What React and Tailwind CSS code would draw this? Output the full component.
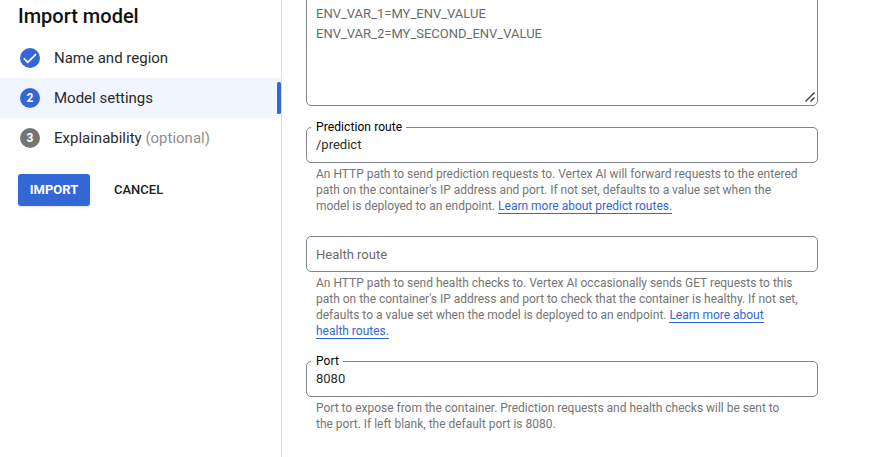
const font = "font-[Roboto,sans-serif]";

function Step({ badge, label, optional, active }) {
  return (
    <div className={`flex h-10 items-center pl-5 ${active ? "bg-[#f0f5ff]" : ""}`}>
      <span className={`flex size-5 items-center justify-center rounded-full text-[12px] font-bold text-white ${optional ? "bg-[#757575]" : "bg-[#3367d6]"}`}>
        {badge}
      </span>
      <span className="ml-3.5 text-[15px] text-[#2b2b2b]">
        {label}
        {optional && <span className="text-[#8f8f8f]"> (optional)</span>}
      </span>
      {active && <span className="ml-auto h-8 w-1 rounded-[1.5px] bg-[#3367d6]" />}
    </div>
  );
}

function Field({ label, value, placeholder, children }) {
  return (
    <div>
      <div className="relative flex h-9 items-center rounded-[5px] border border-[#80868b] px-[9px] text-[13px]">
        {label && (
          <span className="absolute -top-[9px] left-1 bg-white pr-1 pl-[5px] text-[12px] leading-4 tracking-[0.09px] text-black">
            {label}
          </span>
        )}
        <span className={value ? "text-[#2b2b2b]" : "pt-0.5 text-[#6a6a6a]"}>{value || placeholder}</span>
      </div>
      <p className="mt-[3px] pl-2.5 text-[12px] leading-4 tracking-[-0.01px] whitespace-nowrap text-[#757575]">{children}</p>
    </div>
  );
}

function Link({ children }) {
  return <span className="border-b border-[#3367d6] text-[#3367d6]">{children}</span>;
}

export default function App() {
  return (
    <div className={`${font} flex h-[457px] w-[882px] overflow-hidden bg-white`}>
      <aside className="w-[282px] shrink-0 border-r border-[#e0e0e0]">
        <h1 className="flex h-[38px] items-start pt-1 pl-[18px] text-[20px] leading-6 font-medium text-[#111]">Import model</h1>
        <Step
          badge={
            <svg className="size-5" viewBox="0 0 20 20" fill="none" stroke="white" strokeWidth="1.8">
              <path d="M3.8 10.3 7.8 14.3 16 6.1" />
            </svg>
          }
          label="Name and region"
        />
        <Step badge="2" label="Model settings" active />
        <Step badge="3" label="Explainability" optional />
        <div className="mt-4 flex h-8 pl-[18px] text-[13px] font-medium">
          <button className="w-[72px] rounded-[3px] bg-[#3367d6] font-bold text-white shadow">IMPORT</button>
          <button className="ml-6 text-[#212121]">CANCEL</button>
        </div>
      </aside>
      <main className="ml-6 w-[512px]">
        <div className="relative -mt-1 h-[110px] rounded-[5px] border border-[#80868b] px-[9px] pt-[7px] text-[13px] leading-5 text-[#6a6a6a]">
          <div>ENV_VAR_1=MY_ENV_VALUE</div>
          <div>ENV_VAR_2=MY_SECOND_ENV_VALUE</div>
          <svg className="absolute right-0.5 bottom-[3px] size-[10px]" viewBox="0 0 10 10" fill="none" stroke="#3c3c3c" strokeWidth="1.4">
            <path d="M0.5 9.5 9.5 0.5M5.5 9.5 9.5 5.5" />
          </svg>
        </div>
        <div className="mt-[21px]">
          <Field label="Prediction route" value="/predict">
            An HTTP path to send prediction requests to. Vertex AI will forward requests to the entered<br />
            path on the container's IP address and port. If not set, defaults to a value set when the<br />
            model is deployed to an endpoint. <Link>Learn more about predict routes.</Link>
          </Field>
        </div>
        <div className="mt-[22px]">
          <Field placeholder="Health route">
            An HTTP path to send health checks to. Vertex AI occasionally sends GET requests to this<br />
            path on the container's IP address and port to check that the container is healthy. If not set,<br />
            defaults to a value set when the model is deployed to an endpoint. <Link>Learn more about</Link><br />
            <Link>health routes.</Link>
          </Field>
        </div>
        <div className="mt-[22px]">
          <Field label="Port" value="8080">
            Port to expose from the container. Prediction requests and health checks will be sent to<br />
            the port. If left blank, the default port is 8080.
          </Field>
        </div>
      </main>
    </div>
  );
}
